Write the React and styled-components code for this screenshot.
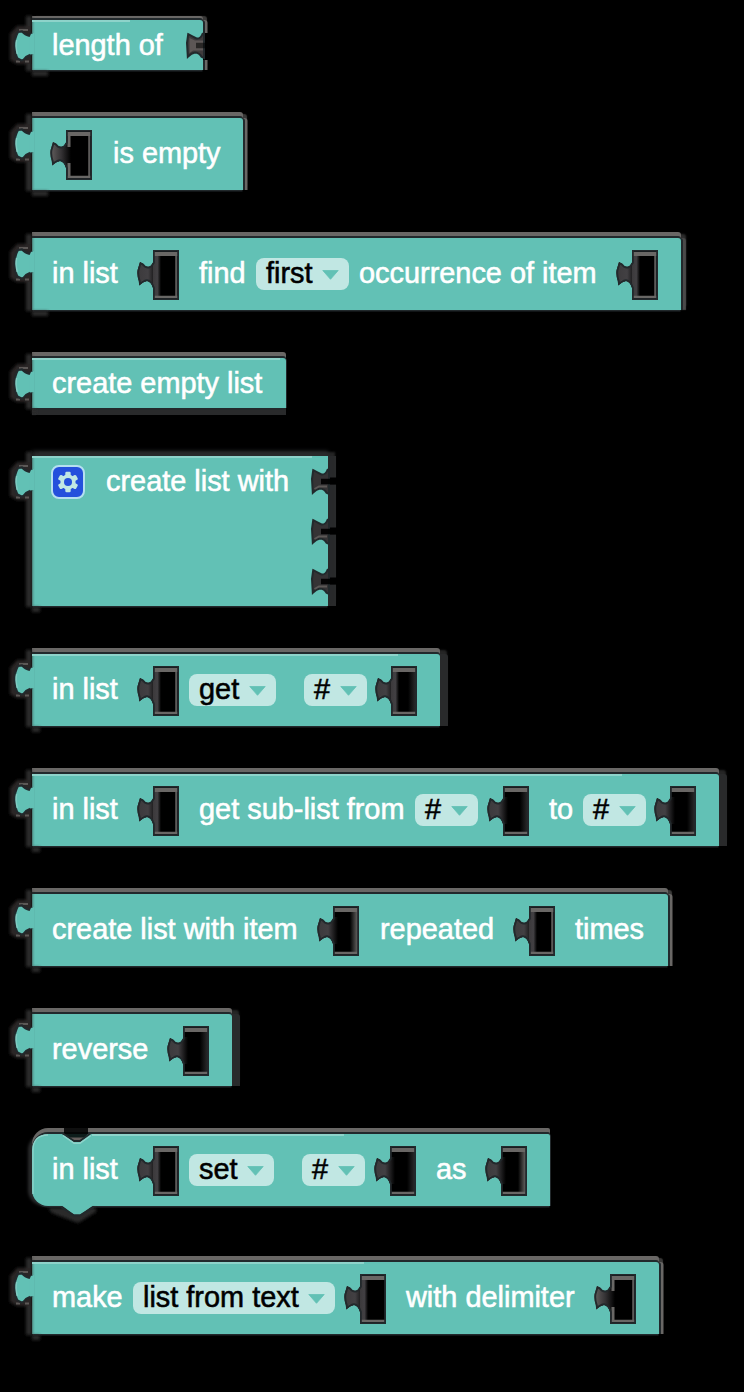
import React from "react";
import styled, { createGlobalStyle, css } from "styled-components";

const TEAL = "#62c1b5";
const PALE = "#c1e7e3";
const LIGHT = "#8ed3ca";
const INK = "#22292c";
const GREY = "#696765";
const DIM = "#292a2b";

const GlobalStyle = createGlobalStyle`
  body { margin: 0; background: #000; }
`;

const Flyout = styled.main`
  box-sizing: border-box;
  width: 744px;
  height: 1392px;
  padding: 20px 0 0 32px;
  overflow: hidden;
  background: #000;
  display: flex;
  flex-direction: column;
  align-items: flex-start;
  gap: 48px;
  font-family: "Liberation Sans", Arial, Helvetica, sans-serif;
  font-size: 28.9px;
  line-height: 32px;
  color: #fff;
`;

const rim = {
  none: "1px 0 0 #22292c",
  light: "2px 0 0 #22292c, 4.5px 0 0 #696765, 4px -4px 1px #3a3938",
  mid: "2px 0 0 #22292c, 5px 0 1px #4a4a4a, 5px -4px 2px #2c2c2c",
  dark: "8px 0 0 #292a2b, 7px -4px 2px #252525",
};

const Block = styled.section`
  position: relative;
  flex: none;
  box-sizing: border-box;
  width: ${(p) => p.$w}px;
  height: ${(p) => p.$h || 72}px;
  padding-left: ${(p) => p.$pad ?? 20}px;
  margin-top: ${(p) => p.$mt || 0}px;
  background: ${TEAL};
  border-radius: ${(p) => (p.$round ? "16px 2px 0 16px" : p.$soft ? "0" : "0 3px 0 0")};
  box-shadow: 0 2px 0 -0.5px ${INK}
    ${(p) => !p.$soft && css`, 0 -2px 0 ${INK}, 0 ${p.$thin ? -4 : -6}px 0 ${GREY}`}
    ${(p) => p.$soft && css`, 0 -5px 4px ${DIM}`}
    ${(p) => p.$base && css`, 0 7px 0 ${DIM}`}
    , ${(p) => rim[p.$rim || "none"]}
    ${(p) => p.$round && css`, -4px 0 3px ${DIM}`};
`;

const Shine = styled.i`
  position: absolute;
  top: 0;
  left: ${(p) => p.$x || 0}px;
  width: ${(p) => p.$w}px;
  height: 2px;
  background: ${LIGHT};
`;

const Row = styled.div`
  display: flex;
  align-items: center;
  height: ${(p) => p.$h || 72}px;
`;

const Label = styled.span`
  flex: none;
  width: ${(p) => p.$w}px;
  padding-bottom: ${(p) => (p.$low ? 0 : 2)}px;
  white-space: pre;
  -webkit-text-stroke: 0.55px #fff;
`;

const Select = styled.span`
  flex: none;
  box-sizing: border-box;
  display: flex;
  justify-content: space-between;
  width: ${(p) => p.$w}px;
  height: 32px;
  margin-right: ${(p) => p.$mr}px;
  padding: 0 10.5px 0 10px;
  border-radius: 8px;
  background: ${PALE};
  color: #000;
  line-height: 30px;
  white-space: pre;
  -webkit-text-stroke: 0.55px #000;
`;

const Arrow = styled.svg`
  flex: none;
  width: 17px;
  height: 10px;
  margin-top: 12px;
`;

const Hole = styled.svg`
  flex: none;
  width: 43px;
  height: 50px;
  margin: 2px ${(p) => p.$mr || 0}px 0 0;
`;

const EdgeArt = styled.svg`
  position: absolute;
  left: -32px;
  top: -12px;
  width: 96px;
  overflow: visible;
  pointer-events: none;
`;

const SideArt = styled.svg`
  position: absolute;
  right: -9px;
  top: ${(p) => p.$y}px;
  width: 28px;
  height: 30px;
`;

const GearBox = styled.span`
  flex: none;
  box-sizing: border-box;
  display: flex;
  width: 34px;
  height: 34px;
  margin: 2px 21px 0 0;
  border: 2px solid #b5dff0;
  border-radius: 8px;
  background: #2450dc;
`;

function Dropdown({ children, w, mr = 0 }) {
  return (
    <Select $w={w} $mr={mr}>
      {children}
      <Arrow viewBox="0 0 17 10">
        <path d="M0.8 0.5H16.2L8.5 9.3Z" fill={TEAL} stroke={TEAL} strokeWidth="0.8" strokeLinejoin="round" />
      </Arrow>
    </Select>
  );
}

const SOCKET = "M17 0H43V50H17V38Q15 31.5 11 31Q7 31.5 3.2 35.5L2.8 31Q0.8 25 1.6 20L4 12Q8 13.5 9.5 16Q14 18.5 17 12.5Z";

let holeCount = 0;
function Socket({ mr, left = "none", right = "none" }) {
  const id = React.useMemo(() => `hole${holeCount++}`, []);
  const wall = { light: GREY, dark: "#2c2c2d", thin: "#5c5a59" };
  return (
    <Hole $mr={mr} viewBox="0 0 43 50">
      <defs>
        <clipPath id={id}><path d={SOCKET} /></clipPath>
        <linearGradient id={`${id}g`} x1="0" x2="1">
          <stop offset="0" stopColor={left === "light" ? "#696463" : "#3b393b"} />
          <stop offset="0.55" stopColor={left === "light" ? "#353335" : "#424043"} />
          <stop offset="1" stopColor="#000" />
        </linearGradient>
        <linearGradient id={`${id}r`} x1="0" x2="1">
          <stop offset="0" stopColor="#000" />
          <stop offset="1" stopColor={wall[right] || "#000"} />
        </linearGradient>
      </defs>
      <g clipPath={`url(#${id})`}>
        <path d={SOCKET} fill="#000" />
        <rect x="0" y="11" width="22" height="27" fill={`url(#${id}g)`} />
        {left === "dark" && <rect x="17" y="4" width="8" height="42" fill={`url(#${id}g)`} />}
        {left === "light" && <path d="M20 4V17M20 33V48" stroke={GREY} strokeWidth="3" />}
        {right === "thin" && <path d="M40.2 4V48" stroke={wall.thin} strokeWidth="2" />}
        {(right === "light" || right === "dark") && (
          <rect x="34" y="4" width="8" height="43" fill={`url(#${id}r)`} />
        )}
        <path d="M5 32.2L8.5 30.5" stroke="#77706e" strokeWidth="1.4" />
        <path d="M18 4H42" stroke={GREY} strokeWidth="4" />
        <path d="M18 47H42" stroke={GREY} strokeWidth="2.4" />
        <path d={SOCKET} fill="none" stroke={INK} strokeWidth="3.6" />
      </g>
    </Hole>
  );
}

function Tab({ h = 72, blot = 16 }) {
  return (
    <EdgeArt height={h + 24} viewBox={`0 0 96 ${h + 24}`}>
      <defs>
        <filter id="haze" x="-50%" y="-50%" width="200%" height="200%">
          <feGaussianBlur stdDeviation="1.5" />
        </filter>
      </defs>
      <g filter="url(#haze)" fill={DIM}>
        <path d={`M26 8H32V${h + 13}H26Z`} />
        <path d="M17 18H31V56H17L10 52V26Z" fill="#292728" />
        <rect x="32" y={h + 13} width={blot} height="5" />
      </g>
      <path d="M19 22H28M16 53.5H20M25 53.5H29" stroke="#5c5856" strokeWidth="2" />
      <path
        d="M32 25L29.8 28Q25 27 22 23.3L18 24Q14.4 30 14.6 38Q15 46 17.5 50.5L21.5 52.5Q24 52 26 49Q29 47.5 32 46"
        fill={TEAL}
        stroke={INK}
        strokeWidth="2.2"
        strokeLinejoin="round"
      />
      <path d="M31 26L29.8 28.6V46.5L34 46V25Z" fill={TEAL} />
      <path d="M16.6 32Q15.2 38 17.3 46" fill="none" stroke="#80ccc2" strokeWidth="1.5" />
    </EdgeArt>
  );
}

const SIDE = "M20 3L18.5 4Q16.5 9 12.5 8.5Q7.5 6 4.2 4.2L3 13L3.8 26.8Q7.5 23 11 22.6Q15.5 23 17.5 26.8L20 28Z";

function SideNotch({ y, light }) {
  return (
    <SideArt $y={y} viewBox="0 0 28 30">
      {light ? (
        <path d="M19 3H28V30H19Z" fill="#000" />
      ) : (
        <path d="M17 15H28" stroke="#000" strokeWidth="7" />
      )}
      <path d={SIDE} fill={light ? "#3f3b3c" : "#353335"} stroke={INK} strokeWidth="2" />
      {light ? (
        <path d="M5.5 8V23L9 20.5H19V10.5H11Z" fill="#5d5756" />
      ) : (
        <path d="M5.5 23L10 20.5H18" fill="none" stroke="#5d5857" strokeWidth="2" />
      )}
      <path d="M12 15.5H28" stroke="#000" strokeWidth="5.5" opacity={light ? 0.55 : 0.9} />
    </SideArt>
  );
}

function StatementEdges() {
  return (
    <EdgeArt height="104" viewBox="0 0 96 104">
      <path d="M64 5H88V12L80 20H74L64 12Z" fill="#000" opacity="0.85" />
      <path d="M69 15.5H85L80 19H74Z" fill="#655e5c" />
      <path d="M55 11H62L74 19H80L91 11H96" fill="none" stroke={INK} strokeWidth="2" />
      <path d="M63 13.5L74 21.2H80L91 13.5" fill="none" stroke={LIGHT} strokeWidth="1.5" />
      <path d="M48 86H96V90L78 101L52 91Z" fill={DIM} filter="url(#haze)" />
      <path d="M61 83L74 92.5H80L94 83Z" fill={TEAL} />
      <path d="M61 85L74 93.5H80L94 85" fill="none" stroke={INK} strokeWidth="2" />
      <path d="M33 72V28Q33 13 48 13" fill="none" stroke={LIGHT} strokeWidth="1.3" />
    </EdgeArt>
  );
}

function Gear() {
  return (
    <GearBox>
      <svg width="30" height="30" viewBox="0 0 30 30">
        <g fill={PALE} transform="translate(15 15)">
          {[0, 60, 120].map((a) => (
            <rect key={a} x="-2.7" y="-10.3" width="5.4" height="20.6" rx="1.2" transform={`rotate(${a})`} />
          ))}
          <circle r="7.6" />
          <circle r="4" fill="#2450dc" />
        </g>
      </svg>
    </GearBox>
  );
}

export default function App() {
  return (
    <>
      <GlobalStyle />
      <Flyout>
        <Block $w={171} $h={50} $rim="light" $thin>
          <Tab h={50} />
          <Shine $w={98} />
          <Row $h={50}><Label $low $w={130}>length of</Label></Row>
          <SideNotch y={10} light />
        </Block>

        <Block $w={211} $pad={17} $rim="light">
          <Tab />
          <Row>
            <Socket mr={21} left="light" right="thin" />
            <Label $w={110}>is empty</Label>
          </Row>
        </Block>

        <Block $w={649} $rim="mid">
          <Tab />
          <Row>
            <Label $w={84}>in list</Label>
            <Socket mr={20} left="dark" right="thin" />
            <Label $w={57}>find</Label>
            <Dropdown w={93} mr={10}>first</Dropdown>
            <Label $w={256}>occurrence of item</Label>
            <Socket left="dark" right="thin" />
          </Row>
        </Block>

        <Block $w={254} $h={50} $base>
          <Tab h={50} blot={4} />
          <Shine $w={248} />
          <Row $h={50}><Label $low $w={220}>create empty list</Label></Row>
        </Block>

        <Block $w={296} $h={150} $pad={19} $rim="dark" $soft>
          <Tab h={150} blot={8} />
          <Shine $w={280} />
          <Row $h={50}>
            <Gear />
            <Label $low $w={190}>create list with</Label>
          </Row>
          <SideNotch y={10} />
          <SideNotch y={60} />
          <SideNotch y={110} />
        </Block>

        <Block $w={408} $rim="dark">
          <Tab blot={8} />
          <Shine $w={366} />
          <Row>
            <Label $w={84}>in list</Label>
            <Socket mr={10} left="dark" right="thin" />
            <Dropdown w={87} mr={28}>get</Dropdown>
            <Dropdown w={63} mr={7}>#</Dropdown>
            <Socket left="dark" right="dark" />
          </Row>
        </Block>

        <Block $w={687} $rim="dark">
          <Tab blot={8} />
          <Shine $w={590} />
          <Row>
            <Label $w={84}>in list</Label>
            <Socket mr={20} left="dark" right="thin" />
            <Label $w={216}>get sub-list from</Label>
            <Dropdown w={63} mr={8}>#</Dropdown>
            <Socket mr={20} right="dark" />
            <Label $w={34}>to</Label>
            <Dropdown w={63} mr={7}>#</Dropdown>
            <Socket right="dark" />
          </Row>
        </Block>

        <Block $w={636} $rim="light">
          <Tab blot={8} />
          <Row>
            <Label $w={264}>create list with item</Label>
            <Socket mr={21} right="light" />
            <Label $w={132}>repeated</Label>
            <Socket mr={20} left="dark" right="thin" />
            <Label $w={70}>times</Label>
          </Row>
        </Block>

        <Block $w={200} $rim="dark">
          <Tab blot={8} />
          <Row>
            <Label $w={114}>reverse</Label>
            <Socket right="dark" />
          </Row>
        </Block>

        <Block $w={518} $round>
          <Shine $x={60} $w={252} />
          <StatementEdges />
          <Row>
            <Label $w={84}>in list</Label>
            <Socket mr={10} left="dark" right="thin" />
            <Dropdown w={85} mr={28}>set</Dropdown>
            <Dropdown w={63} mr={8}>#</Dropdown>
            <Socket mr={20} right="dark" />
            <Label $w={48}>as</Label>
            <Socket right="light" />
          </Row>
        </Block>

        <Block $w={627} $mt={8} $rim="light">
          <Tab blot={8} />
          <Shine $w={332} />
          <Row>
            <Label $w={81}>make</Label>
            <Dropdown w={202} mr={8}>list from text</Dropdown>
            <Socket mr={20} left="dark" />
            <Label $w={187}>with delimiter</Label>
            <Socket left="light" right="thin" />
          </Row>
        </Block>
      </Flyout>
    </>
  );
}
